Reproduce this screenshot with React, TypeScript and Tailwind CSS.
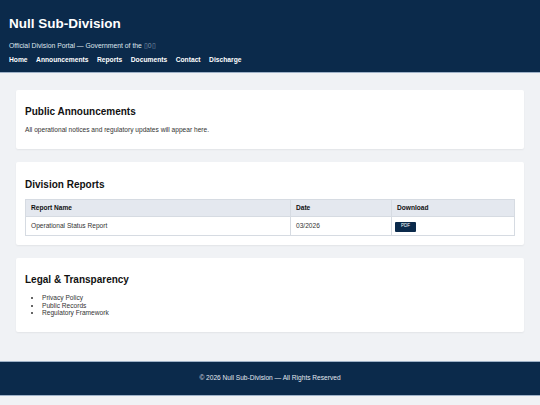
export default function App() {
  const nav = ['Home', 'Announcements', 'Reports', 'Documents', 'Contact', 'Discharge']
  const legal = ['Privacy Policy', 'Public Records', 'Regulatory Framework']

  return (
    <div className="min-h-screen bg-[#f0f2f5] font-['Liberation_Sans',Arial,sans-serif] text-[#222]">
      <header className="bg-[#0b2a4b] border-b border-[#9fb2c8] px-[9px] pt-[16px] pb-[8px] text-white">
        <h1 className="text-[13.5px] leading-[16px] font-bold">Null Sub-Division</h1>
        <p className="mt-[10px] text-[6.8px] leading-[8px] text-[#dfe6ee]">
          Official Division Portal — Government of the <span className="text-[#7f93aa]">▯0▯</span>
        </p>
        <nav className="mt-[6px] flex gap-[8.5px] text-[6.7px] leading-[8px] font-bold">
          {nav.map(n => (
            <span key={n}>{n}</span>
          ))}
        </nav>
      </header>

      <main className="px-[16px] pt-[17px] pb-[29px] flex flex-col gap-[13px]">
        <section className="bg-white rounded-[2px] shadow-[0_1px_2px_rgba(0,0,0,0.06)] px-[9px] pt-[9px] pb-[9px]">
          <h2 className="mt-[7px] mb-[8px] text-[10px] leading-[12px] font-bold text-[#111]">Public Announcements</h2>
          <p className="mb-[6px] text-[6.6px] leading-[8px] text-[#333]">
            All operational notices and regulatory updates will appear here.
          </p>
        </section>

        <section className="bg-white rounded-[2px] shadow-[0_1px_2px_rgba(0,0,0,0.06)] px-[9px] pt-[9px] pb-[9px]">
          <h2 className="mt-[8px] mb-[8px] text-[10px] leading-[12px] font-bold text-[#111]">Division Reports</h2>
          <table className="w-full border-collapse text-[6.6px] text-[#333]">
            <thead>
              <tr className="bg-[#e4e8ef] h-[17px]">
                <th className="w-[265px] border border-[#d6dbe2] text-left font-bold px-[5px] text-[#111]">Report Name</th>
                <th className="w-[101px] border border-[#d6dbe2] text-left font-bold px-[5px] text-[#111]">Date</th>
                <th className="border border-[#d6dbe2] text-left font-bold px-[5px] text-[#111]">Download</th>
              </tr>
            </thead>
            <tbody>
              <tr className="h-[19px]">
                <td className="border border-[#d6dbe2] px-[5px]">Operational Status Report</td>
                <td className="border border-[#d6dbe2] px-[5px]">03/2026</td>
                <td className="border border-[#d6dbe2] px-[3px]">
                  <span className="inline-flex items-center justify-center w-[21px] h-[10px] bg-[#0b2a4b] text-white text-[4.5px] rounded-[1px]">
                    PDF
                  </span>
                </td>
              </tr>
            </tbody>
          </table>
        </section>

        <section className="bg-white rounded-[2px] shadow-[0_1px_2px_rgba(0,0,0,0.06)] px-[9px] pt-[9px] pb-[9px]">
          <h2 className="mt-[7px] mb-[8px] text-[10px] leading-[12px] font-bold text-[#111]">Legal &amp; Transparency</h2>
          <ul className="mb-[6px] list-disc pl-[17px] text-[6.6px] leading-[7.5px] text-[#333]">
            {legal.map(l => (
              <li key={l}>{l}</li>
            ))}
          </ul>
        </section>
      </main>

      <footer className="bg-[#0b2a4b] border-t border-b border-[#9fb2c8] h-[35px] flex items-center justify-center text-[6.6px] text-[#e3e8ef]">
        © 2026 Null Sub-Division — All Rights Reserved
      </footer>
    </div>
  )
}
